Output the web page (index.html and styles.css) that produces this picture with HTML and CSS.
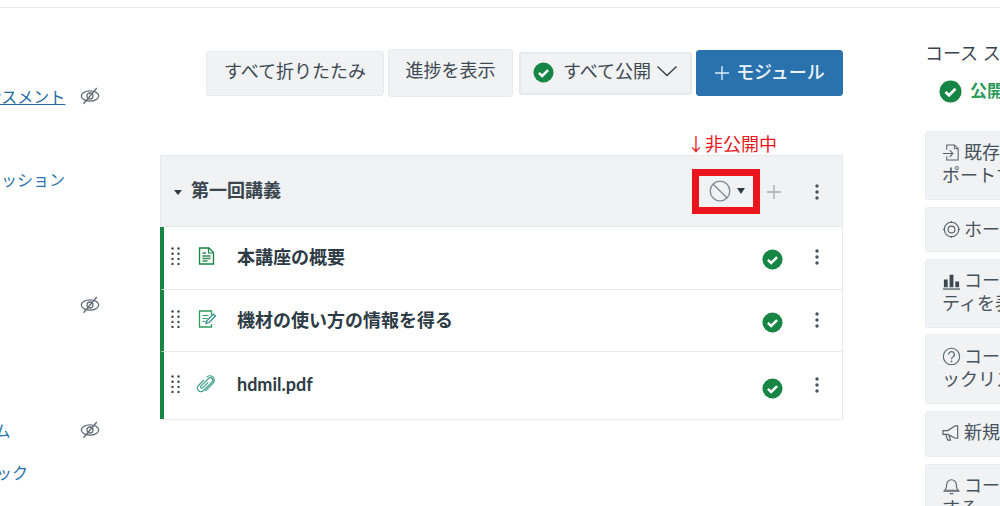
FILE: index.html
```html
<!DOCTYPE html>
<html lang="ja">
<head>
<meta charset="utf-8">
<title>モジュール</title>
<link rel="stylesheet" href="styles.css">
</head>
<body>
<svg class="defs" width="0" height="0" aria-hidden="true">
  <symbol id="check" viewBox="0 0 22 22"><circle cx="11" cy="11" r="10.5" fill="#178544"/><path d="M6.2 11.4l3.4 3.2 6.2-6.2" fill="none" stroke="#fff" stroke-width="2.6"/></symbol>
  <symbol id="eye" viewBox="0 0 20 18"><ellipse cx="10" cy="9" rx="8.7" ry="5.2" fill="none" stroke="#66717a" stroke-width="1.3"/><circle cx="10" cy="9" r="3" fill="none" stroke="#66717a" stroke-width="1.3"/><path d="M3.5 16.8L16.8 1" stroke="#66717a" stroke-width="1.4"/></symbol>
  <symbol id="kebab" viewBox="0 0 4 16"><circle cx="2" cy="2" r="1.7" fill="#46525c"/><circle cx="2" cy="8" r="1.7" fill="#46525c"/><circle cx="2" cy="14" r="1.7" fill="#46525c"/></symbol>
  <symbol id="drag" viewBox="0 0 9 18"><g fill="#3b4650"><circle cx="1.5" cy="1.5" r="1.2"/><circle cx="7.5" cy="1.5" r="1.2"/><circle cx="1.5" cy="6.7" r="1.2"/><circle cx="7.5" cy="6.7" r="1.2"/><circle cx="1.5" cy="11.9" r="1.2"/><circle cx="7.5" cy="11.9" r="1.2"/><circle cx="1.5" cy="17" r="1.2"/><circle cx="7.5" cy="17" r="1.2"/></g></symbol>
</svg>

<div class="topline"></div>
<div class="page">
  <nav class="nav">
    <div class="nav-row"><a class="nav-link nav-current">アナウンスメント</a><svg class="eye"><use href="#eye"/></svg></div>
    <div class="nav-row"></div>
    <div class="nav-row"><a class="nav-link">ディスカッション</a></div>
    <div class="nav-row"></div>
    <div class="nav-row"></div>
    <div class="nav-row"><span></span><svg class="eye"><use href="#eye"/></svg></div>
    <div class="nav-row"></div>
    <div class="nav-row"></div>
    <div class="nav-row"><a class="nav-link nav-prog">プログラム</a><svg class="eye"><use href="#eye"/></svg></div>
    <div class="nav-row"><a class="nav-link nav-rub">ルーブリック</a></div>
  </nav>

  <main class="main">
    <div class="toolbar">
      <button class="btn btn-collapse">すべて折りたたみ</button>
      <button class="btn btn-progress">進捗を表示</button>
      <button class="btn btn-publish"><svg class="check-sm"><use href="#check"/></svg>すべて公開<svg class="chev" viewBox="0 0 22 12"><path d="M1.5 1.5L11 10.5 20.5 1.5" fill="none" stroke="#39444d" stroke-width="1.5"/></svg></button>
      <button class="btn btn-primary"><svg class="plus-w" viewBox="0 0 16 16"><path d="M8 1v14M1 8h14" stroke="#dcebf6" stroke-width="1.4"/></svg>モジュール</button>
    </div>

    <div class="note">↓非公開中</div>

    <section class="module">
      <header class="module-head">
        <span class="tri"></span>
        <h2 class="module-title">第一回講義</h2>
        <div class="unpub">
          <svg class="ban" viewBox="0 0 22 22"><circle cx="11" cy="11" r="9.8" fill="none" stroke="#7d8a94" stroke-width="1.3"/><path d="M4.2 4.2l13.6 13.6" stroke="#7d8a94" stroke-width="1.3"/></svg>
          <span class="caret"></span>
        </div>
        <svg class="plus" viewBox="0 0 16 16"><path d="M8 1v14M1 8h14" stroke="#a3adb5" stroke-width="1.4"/></svg>
        <svg class="kebab"><use href="#kebab"/></svg>
      </header>

      <div class="item item-1">
        <svg class="drag"><use href="#drag"/></svg>
        <svg class="type" viewBox="0 0 16 18"><path d="M1 1h9.500L15 5.500V17H1z" fill="#f4f8f5" stroke="#178544" stroke-width="1.300"/><path d="M10 1v5h5" fill="none" stroke="#178544" stroke-width="1.100"/><path d="M4 6h3.500M4 9h8M4 11.500h8M4 14h5" stroke="#3a8c60" stroke-width="1.300"/></svg>
        <span class="item-title">本講座の概要</span>
        <svg class="check"><use href="#check"/></svg>
        <svg class="kebab"><use href="#kebab"/></svg>
      </div>
      <div class="item item-2">
        <svg class="drag"><use href="#drag"/></svg>
        <svg class="type type-edit" viewBox="0 0 18 18"><path d="M13 5V1H1v16h12v-3" fill="none" stroke="#2f9a5e" stroke-width="1.300"/><path d="M4 5.500h6M4 8.500h5M4 11.500h3" stroke="#2f9a5e" stroke-width="1.200"/><path d="M7.500 13.500l1-3 6.500-6.500 2 2-6.500 6.500z" fill="none" stroke="#2a8a84" stroke-width="1.200"/></svg>
        <span class="item-title">機材の使い方の情報を得る</span>
        <svg class="check"><use href="#check"/></svg>
        <svg class="kebab"><use href="#kebab"/></svg>
      </div>
      <div class="item item-3">
        <svg class="drag"><use href="#drag"/></svg>
        <svg class="type type-clip" viewBox="0 0 18 18"><path d="M7 5.500L2.200 10.300a3.200 3.200 0 0 0 4.600 4.600l7.600-7.600a2.200 2.200 0 0 0-3.200-3.200L4.400 10.900a1.100 1.100 0 0 0 1.600 1.600L11 7.500M9.500 2.800a4 4 0 0 1 5.900 5.400L8.500 15.200" fill="none" stroke="#3f9e8a" stroke-width="1.100"/></svg>
        <span class="item-title">hdmil.pdf</span>
        <svg class="check"><use href="#check"/></svg>
        <svg class="kebab"><use href="#kebab"/></svg>
      </div>
    </section>
  </main>

  <aside class="side">
    <h2 class="side-title">コース ステータス</h2>
    <div class="side-status"><svg class="check-lg"><use href="#check"/></svg><strong>公開済み</strong></div>

    <div class="side-btn sb-1">
      <div class="sb-line"><svg class="ico" viewBox="0 0 20 20"><path d="M5 7V2h8l4 4v12H5v-4" fill="none" stroke="#55616b" stroke-width="1.100"/><path d="M13 2v4h4" fill="none" stroke="#55616b" stroke-width="1"/><path d="M1 11h10M8 7.500l3.500 3.500L8 14.500" fill="none" stroke="#55616b" stroke-width="1.100"/></svg>既存のコンテンツをイン</div>
      <div class="sb-line">ポートする</div>
    </div>
    <div class="side-btn sb-2">
      <div class="sb-line"><svg class="ico" viewBox="0 0 20 20"><circle cx="10" cy="10" r="7.600" fill="none" stroke="#55616b" stroke-width="1.200"/><circle cx="10" cy="10" r="3.600" fill="none" stroke="#55616b" stroke-width="1.200"/><path d="M10 1v2M10 17v2M1 10h2M17 10h2" stroke="#55616b" stroke-width="1.200"/></svg>ホームページを選択</div>
    </div>
    <div class="side-btn sb-3">
      <div class="sb-line"><svg class="ico" viewBox="0 0 20 20"><path d="M2 9h4v8H2zM8 4h4v13H8zM14 11h4v6h-4z" fill="#3b4650"/><path d="M1 19h18" stroke="#3b4650" stroke-width="1.200"/></svg>コース ストリームとアクティビ</div>
      <div class="sb-line">ティを表示</div>
    </div>
    <div class="side-btn sb-4">
      <div class="sb-line"><svg class="ico" viewBox="0 0 20 20"><circle cx="10" cy="10" r="8.600" fill="none" stroke="#55616b" stroke-width="1.100"/><path d="M7 8a3 3 0 1 1 4.600 2.400c-1 .7-1.600 1.200-1.600 2.600" fill="none" stroke="#55616b" stroke-width="1.200"/><circle cx="10" cy="15.200" r=".9" fill="#55616b"/></svg>コース セットアップ チェ</div>
      <div class="sb-line">ックリスト</div>
    </div>
    <div class="side-btn sb-5">
      <div class="sb-line"><svg class="ico" viewBox="0 0 20 20"><path d="M1 8h5l8-5h2.500v13H14L6 12H1z" fill="none" stroke="#55616b" stroke-width="1.200"/><path d="M4 12l2 6h3l-1.500-5" fill="none" stroke="#55616b" stroke-width="1.200"/></svg>新規アナウンスメント</div>
    </div>
    <div class="side-btn sb-6">
      <div class="sb-line"><svg class="ico" viewBox="0 0 20 20"><path d="M3 15c1.500-1.500 2-3 2-6a5 5 0 0 1 10 0c0 3 .5 4.500 2 6z" fill="none" stroke="#55616b" stroke-width="1.200"/><path d="M1.500 16h17M8 18.500h4" stroke="#55616b" stroke-width="1.200"/></svg>コース通知を表示</div>
      <div class="sb-line">する</div>
    </div>
  </aside>
</div>
</body>
</html>
```

FILE: styles.css
```css
* { box-sizing: border-box; }

html, body {
  margin: 0;
  height: 506px;
  overflow: hidden;
  background: #fff;
}

body {
  font-family: Lato, "Noto Sans CJK JP", sans-serif;
  font-size: 18px;
  color: #2d3b45;
}

.defs { display: block; height: 0; }

.topline {
  height: 8px;
  border-bottom: 1px solid #e6e8ea;
}

.page { display: flex; align-items: flex-start; }

/* left course navigation, scrolled partly out of the frame */
.nav {
  flex: 0 0 160px;
  padding-top: 67px;
}
.nav-row {
  height: 41.8px;
  width: 100px;
  display: grid;
  grid-template-columns: 80px 20px;
  align-items: center;
}
.nav-link {
  display: block;
  margin-left: -62px;
  white-space: nowrap;
  font-size: 16px;
  color: #2b75ad;
}
.nav-current { color: #2469a0; text-decoration: underline; }
.nav-prog { margin-left: -69px; }
.nav-rub { margin-left: -67px; }
.eye { width: 20px; height: 18px; grid-column: 2; }

/* main column */
.main { flex: 0 0 683px; padding-top: 41px; }

.toolbar {
  display: flex;
  align-items: center;
  justify-content: flex-end;
  height: 48px;
}
.btn {
  display: flex;
  align-items: center;
  justify-content: center;
  font: inherit;
  color: #3c4852;
  background: #f1f2f4;
  border: 1px solid #e8eaec;
  border-radius: 3px;
  padding: 0 0 6px;
  white-space: nowrap;
}
.btn-collapse { width: 178px; height: 45px; margin-right: 4px; }
.btn-progress { width: 125px; height: 48px; margin-right: 6px; padding-bottom: 8px; }
.btn-publish { width: 173px; height: 43px; margin-right: 4px; border: 2px solid #e7e9eb; }
.btn-primary {
  width: 147px;
  height: 46px;
  padding-bottom: 4px;
  color: #eef5fa;
  background: #2a72ae;
  border-color: #2a72ae;
  font-weight: 500;
}
.check-sm { width: 21px; height: 21px; margin: 4px 9px 0 0; }
.chev { width: 22px; height: 12px; margin: 2px 0 0 5px; }
.plus-w { width: 16px; height: 16px; margin: 4px 6px 0 0; }

.note {
  height: 18px;
  margin-top: 37px;
  padding-right: 66px;
  line-height: 18px;
  text-align: right;
  font-family: "Noto Sans CJK JP", sans-serif;
  font-size: 18px;
  color: #e8161c;
}

.module {
  margin-top: 3px;
  border-right: 1px solid #e8eaec;
  border-bottom: 1px solid #e8eaec;
}
.module-head {
  display: flex;
  align-items: center;
  height: 72px;
  padding: 0 23px 0 13px;
  background: #f0f2f4;
  border-top: 1px solid #e6e8ea;
  border-bottom: 1px solid #e6e8ea;
  border-left: 1px solid #e8eaec;
}
.tri {
  width: 0;
  height: 0;
  margin: 2px 9px 0 0;
  border-left: 4px solid transparent;
  border-right: 4px solid transparent;
  border-top: 5px solid #2d3b45;
}
.module-title {
  flex: 1;
  margin: 0 0 5px;
  font-size: 18px;
  font-weight: 700;
  color: #39444d;
}
.unpub {
  display: flex;
  align-items: center;
  width: 68px;
  height: 45px;
  margin-top: 1px;
  padding-left: 10px;
  border: 7px solid #ea141c;
}
.ban { width: 22px; height: 22px; margin: -2px 6px 0 0; }
.caret {
  width: 0;
  height: 0;
  margin-top: -2px;
  border-left: 4.5px solid transparent;
  border-right: 4.5px solid transparent;
  border-top: 6px solid #2d3b45;
}
.plus { width: 16px; height: 16px; margin: 2px 33px 0 6px; }
.kebab { width: 4px; height: 16px; flex: none; margin-top: 2px; }
.module-head .kebab { margin-top: 2px; }

.item {
  display: flex;
  align-items: center;
  padding: 0 23px 4px 7px;
  border-left: 4px solid #178544;
  border-bottom: 1px solid #e8eaec;
}
.item-1 { height: 63px; }
.item-2 { height: 62px; }
.item-3 { height: 67px; border-bottom: 0; }

.drag { width: 9px; height: 18px; flex: none; margin-right: 18px; }
.type { width: 17px; height: 18px; flex: none; margin-right: 22px; }
.type-edit { width: 19px; margin-right: 20px; }
.type-clip { width: 20px; height: 20px; margin: 0 21px 0 -2px; }
.item-title {
  flex: 1;
  font-size: 18px;
  font-weight: 700;
  color: #2d3b45;
}
.check { width: 21px; height: 21px; flex: none; margin: 7px 32px 0 0; }
.item-3 .check { margin-top: 9px; }

/* right sidebar */
.side {
  flex: none;
  width: 220px;
  margin-left: 82px;
  padding-top: 32px;
  white-space: nowrap;
}
.side-title {
  margin: 0;
  height: 26px;
  line-height: 26px;
  font-size: 18px;
  font-weight: 400;
  color: #39444d;
}
.side-status {
  display: flex;
  align-items: center;
  height: 26px;
  margin-top: 12px;
  padding-left: 14px;
  color: #2e9b5c;
  font-size: 17px;
}
.side-status strong { font-weight: 700; margin-bottom: 4px; }
.check-lg { width: 23px; height: 23px; margin-right: 8px; }

.side-btn {
  padding: 9px 0 0 16px;
  background: #f1f2f4;
  border: 1px solid #ebedef;
  border-radius: 3px;
  font-size: 18px;
  line-height: 23px;
  color: #46525c;
  margin-bottom: 7px;
}
.sb-line { display: flex; align-items: center; }
.ico { width: 19px; height: 19px; flex: none; margin-right: 3px; }
.sb-1 { height: 69px; margin-top: 27px; }
.sb-2 { height: 45px; padding-top: 10px; }
.sb-3 { height: 69px; margin-bottom: 6px; }
.sb-4 { height: 70px; padding-top: 10px; }
.sb-5 { height: 46px; }
.sb-6 { height: 69px; }
```
